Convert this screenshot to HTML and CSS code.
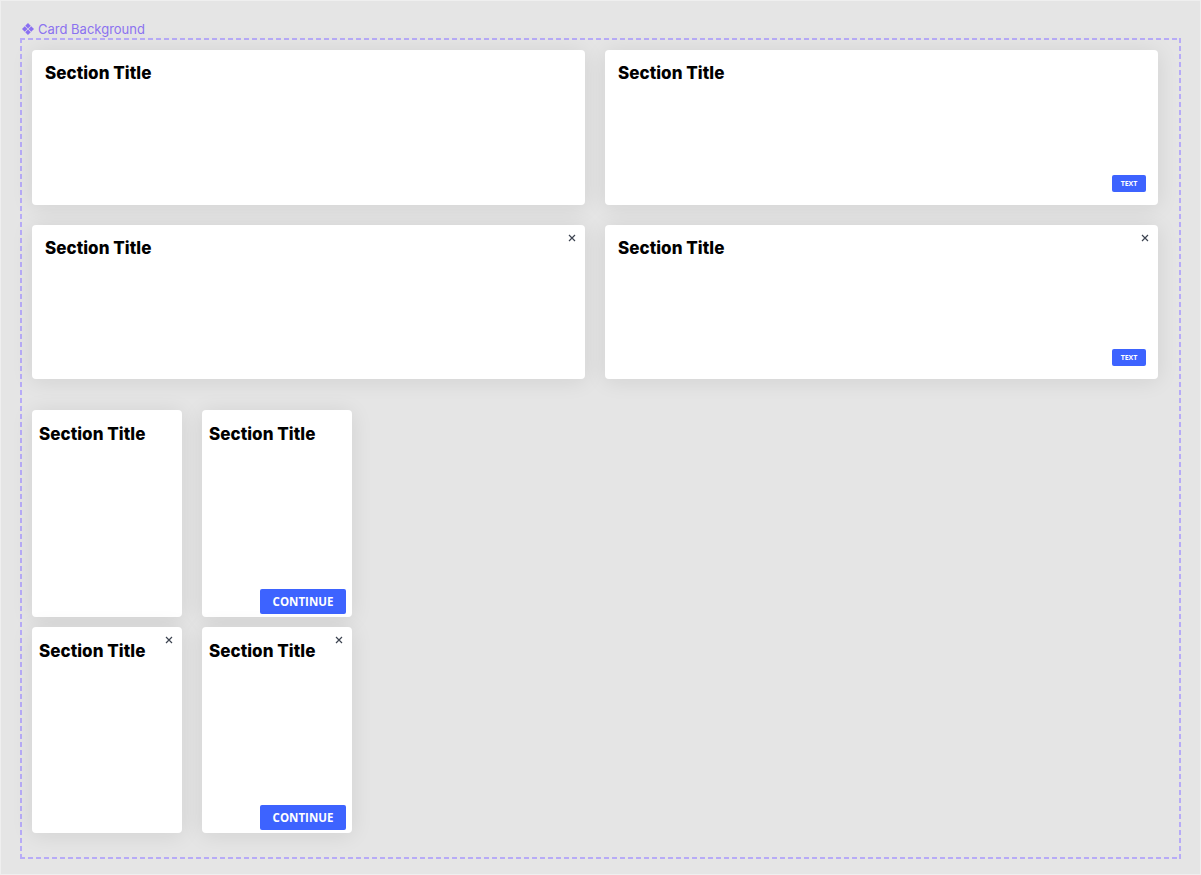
FILE: index.html
```html
<!DOCTYPE html>
<html>
<head>
<meta charset="utf-8">
<link rel="stylesheet" href="styles.css">
</head>
<body>
<div class="page">
  <div class="label"><svg class="label-icon" viewBox="0 0 10 10"><path d="M5 0L7.3 2.3L5 4.6L2.7 2.3Z M5 5.4L7.3 7.7L5 10L2.7 7.7Z M0 5L2.3 2.7L4.6 5L2.3 7.3Z M5.4 5L7.7 2.7L10 5L7.7 7.3Z" fill="#8a70f2"/></svg>Card Background</div>
  <div class="frame">
    <div class="wide-grid">
      <div class="card wide">
        <div class="title">Section Title</div>
      </div>
      <div class="card wide">
        <div class="title">Section Title</div>
        <div class="foot"><button class="btn-small">TEXT</button></div>
      </div>
      <div class="card wide">
        <div class="title">Section Title</div>
        <svg class="close" viewBox="0 0 8 8"><path d="M1 1L7 7M7 1L1 7" stroke="#3d4451" stroke-width="1.2"/></svg>
      </div>
      <div class="card wide">
        <div class="title">Section Title</div>
        <svg class="close" viewBox="0 0 8 8"><path d="M1 1L7 7M7 1L1 7" stroke="#3d4451" stroke-width="1.2"/></svg>
        <div class="foot"><button class="btn-small">TEXT</button></div>
      </div>
    </div>
    <div class="narrow-grid">
      <div class="card narrow">
        <div class="title">Section Title</div>
      </div>
      <div class="card narrow">
        <div class="title">Section Title</div>
        <div class="foot"><button class="btn-large">CONTINUE</button></div>
      </div>
      <div class="card narrow">
        <div class="title">Section Title</div>
        <svg class="close" viewBox="0 0 8 8"><path d="M1 1L7 7M7 1L1 7" stroke="#3d4451" stroke-width="1.2"/></svg>
      </div>
      <div class="card narrow">
        <div class="title">Section Title</div>
        <svg class="close" viewBox="0 0 8 8"><path d="M1 1L7 7M7 1L1 7" stroke="#3d4451" stroke-width="1.2"/></svg>
        <div class="foot"><button class="btn-large">CONTINUE</button></div>
      </div>
    </div>
  </div>
</div>
</body>
</html>
```
FILE: styles.css
```css
html, body {
  margin: 0;
  padding: 0;
  background: #e5e5e5;
}
.page {
  box-sizing: border-box;
  width: 1201px;
  height: 875px;
  border: 1px solid #efefef;
  padding: 19px 0 0 19px;
  font-family: Inter, "Liberation Sans", sans-serif;
}
.label {
  display: flex;
  align-items: center;
  gap: 4px;
  height: 18px;
  font-size: 13px;
  color: #8b72f0;
  margin-bottom: 0;
  padding-left: 2px;
}
.label-icon {
  width: 12px;
  height: 12px;
}
.frame {
  box-sizing: border-box;
  width: 1161px;
  height: 821px;
  padding: 12px 22px 0 12px;
  background:
    linear-gradient(90deg, #b7abf7 5px, transparent 5px) top left / 8px 2px repeat-x,
    linear-gradient(90deg, #b7abf7 5px, transparent 5px) bottom left / 8px 2px repeat-x,
    linear-gradient(180deg, #b7abf7 5px, transparent 5px) top left / 2px 8px repeat-y,
    linear-gradient(180deg, #b7abf7 5px, transparent 5px) top right / 2px 8px repeat-y;
}
.wide-grid {
  display: grid;
  grid-template-columns: 553px 553px;
  grid-template-rows: 155px 154px;
  gap: 20px;
}
.narrow-grid {
  display: grid;
  grid-template-columns: 150px 150px;
  grid-template-rows: 207px 206px;
  column-gap: 20px;
  row-gap: 10px;
  margin-top: 31px;
}
.card {
  position: relative;
  background: #fff;
  border-radius: 4px;
  box-shadow: 0 2px 22px rgba(0, 0, 0, 0.09);
  display: flex;
  flex-direction: column;
  box-sizing: border-box;
}
.card.wide {
  padding: 13px 12px 13px 13px;
}
.card.narrow {
  padding: 14px 6px 3px 7px;
}
.title {
  font-family: Inter, "Liberation Sans", sans-serif;
  font-weight: 800;
  font-size: 17px;
  line-height: 20px;
  color: #000;
  letter-spacing: 0.05px;
}
.foot {
  margin-top: auto;
  display: flex;
  justify-content: flex-end;
}
.btn-small {
  width: 34px;
  height: 17px;
  border: none;
  border-radius: 2px;
  background: #3d63ff;
  color: #fff;
  font-family: "Open Sans", sans-serif;
  font-weight: 700;
  font-size: 7px;
  padding: 0;
}
.btn-large {
  width: 86px;
  height: 25px;
  border: none;
  border-radius: 2px;
  background: #3d63ff;
  color: #fff;
  font-family: "Open Sans", sans-serif;
  font-weight: 700;
  font-size: 11.5px;
  letter-spacing: 0;
  padding: 0;
}
.close {
  position: absolute;
  width: 8px;
  height: 8px;
  top: 9px;
  right: 9px;
}
```
